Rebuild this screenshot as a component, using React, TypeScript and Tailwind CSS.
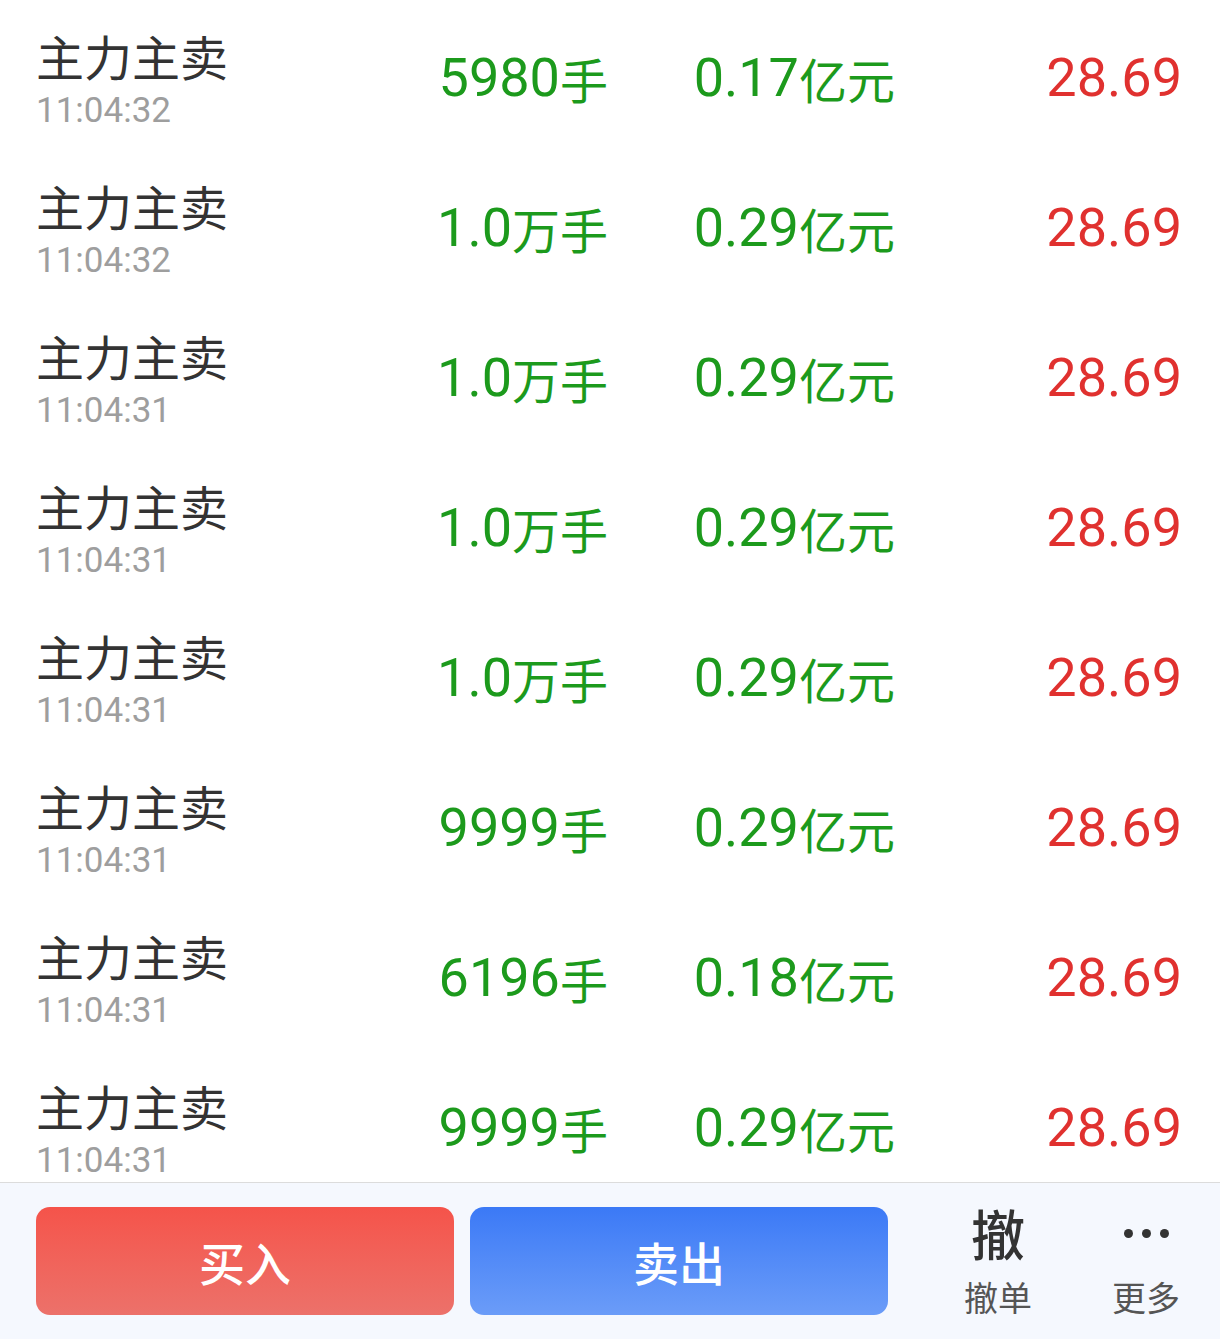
import React from "react";

type Trade = {
  time: string;
  vol: string;
  volUnit: string;
  amount: string;
  price: string;
};

const trades: Trade[] = [
  { time: "11:04:32", vol: "5980", volUnit: "手", amount: "0.17", price: "28.69" },
  { time: "11:04:32", vol: "1.0", volUnit: "万手", amount: "0.29", price: "28.69" },
  { time: "11:04:31", vol: "1.0", volUnit: "万手", amount: "0.29", price: "28.69" },
  { time: "11:04:31", vol: "1.0", volUnit: "万手", amount: "0.29", price: "28.69" },
  { time: "11:04:31", vol: "1.0", volUnit: "万手", amount: "0.29", price: "28.69" },
  { time: "11:04:31", vol: "9999", volUnit: "手", amount: "0.29", price: "28.69" },
  { time: "11:04:31", vol: "6196", volUnit: "手", amount: "0.18", price: "28.69" },
  { time: "11:04:31", vol: "9999", volUnit: "手", amount: "0.29", price: "28.69" },
];

const cjk = "font-['Noto_Sans_CJK_SC','Noto_Sans',sans-serif]";
const num = "font-['Roboto','Noto_Sans_CJK_SC',sans-serif]";

function TradeRow({ t }: { t: Trade }) {
  return (
    <div className="flex h-[150px] shrink-0">
      {/* label + time */}
      <div className="w-[400px] pl-[36px] pt-[28px] flex flex-col">
        <span className={`${cjk} text-[48px] leading-[54px] text-[#333333]`}>主力主卖</span>
        <span className={`${num} mt-[9px] text-[35px] leading-[40px] text-[#9e9e9e]`}>{t.time}</span>
      </div>

      {/* volume */}
      <div className="w-[208px] pt-[6px] flex items-center justify-end text-[#1c9a1c]">
        <span className={`${num} text-[54px] leading-[64px]`}>{t.vol}</span>
        <span className={`${cjk} text-[48px] leading-[64px]`}>{t.volUnit}</span>
      </div>

      {/* amount */}
      <div className="w-[287px] pt-[6px] flex items-center justify-end text-[#1c9a1c]">
        <span className={`${num} text-[54px] leading-[64px]`}>{t.amount}</span>
        <span className={`${cjk} text-[48px] leading-[64px]`}>亿元</span>
      </div>

      {/* price */}
      <div className="w-[287px] pt-[6px] flex items-center justify-end text-[#e0312f]">
        <span className={`${num} text-[54px] leading-[64px]`}>{t.price}</span>
      </div>
    </div>
  );
}

export default function App() {
  return (
    <div className="w-[1220px] h-[1339px] bg-white flex flex-col overflow-hidden">
      <div className="flex-1 flex flex-col overflow-hidden">
        {trades.map((t, i) => (
          <TradeRow key={i} t={t} />
        ))}
      </div>

      {/* Bottom action bar */}
      <div className="h-[157px] shrink-0 border-t border-[#dcdcdc] bg-[#f5f8fe] flex items-start pt-[24px] pl-[36px]">
        <button
          className={`${cjk} w-[418px] h-[108px] rounded-[14px] bg-gradient-to-b from-[#f5534a] to-[#ec716a] text-white text-[46px] font-medium flex items-center justify-center`}
        >
          买入
        </button>
        <button
          className={`${cjk} ml-[16px] w-[418px] h-[108px] rounded-[14px] bg-gradient-to-b from-[#3b79f6] to-[#6b9cf8] text-white text-[46px] font-medium flex items-center justify-center`}
        >
          卖出
        </button>

        <div className="ml-[36px] w-[148px] flex flex-col items-center">
          <span className={`${cjk} text-[54px] leading-[52px] font-medium text-[#333333]`}>撤</span>
          <span className={`${cjk} mt-[18px] text-[34px] leading-[40px] text-[#555555]`}>撤单</span>
        </div>
        <div className="w-[148px] flex flex-col items-center">
          <div className="h-[52px] flex items-center gap-[9px]">
            <div className="w-[9px] h-[9px] rounded-full bg-[#333333]" />
            <div className="w-[9px] h-[9px] rounded-full bg-[#333333]" />
            <div className="w-[9px] h-[9px] rounded-full bg-[#333333]" />
          </div>
          <span className={`${cjk} mt-[18px] text-[34px] leading-[40px] text-[#555555]`}>更多</span>
        </div>
      </div>
    </div>
  );
}
